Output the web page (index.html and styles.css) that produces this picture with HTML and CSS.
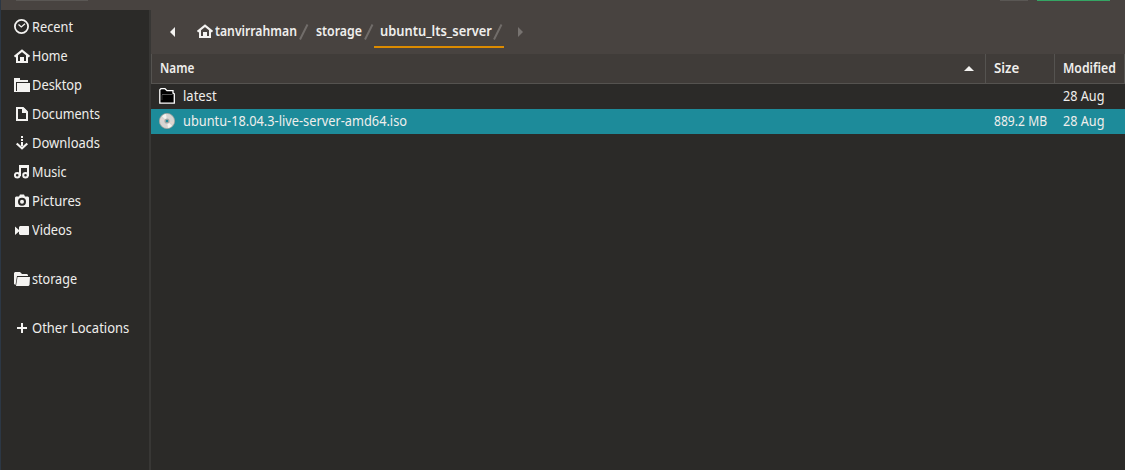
FILE: index.html
```html
<!DOCTYPE html>
<html lang="en">
<head>
<meta charset="utf-8">
<title>Files</title>
<link rel="stylesheet" href="styles.css">
</head>
<body>
<svg class="defs"><defs>
  <g id="home"><path d="M.5 8.700 8 2.700l7.500 6" fill="none" stroke="#f4f3f1" stroke-width="2.200"/><path d="M2 7.500 4 6v7h2V9h4v4h2V6l2 1.500V15H2z" fill="#f4f3f1"/></g>
  <g id="folder"><path d="M0 2l1-1h5l2 2h5l1 1v1H3L1.500 14 0 13zM3.500 6H16l-.5 8-1 1H2z" fill="#f4f3f1"/></g>
</defs></svg>
<div class="window">
  <div class="titlebar"><i class="btn btn-left"></i><i class="btn btn-search"></i><i class="btn btn-open"></i></div>
  <div class="body">
    <nav class="sidebar">
      <a class="place"><svg class="icon" viewBox="0 0 16 16"><circle cx="7.500" cy="7.500" r="6.600" fill="none" stroke="#f4f3f1" stroke-width="1.800"/><path d="M4.500 5.500 7.300 8 11 4.800" fill="none" stroke="#f4f3f1" stroke-width="1.300"/></svg><span class="t recent">Recent</span></a>
      <a class="place"><svg class="icon" viewBox="0 0 16 16"><use href="#home"/></svg><span class="t home">Home</span></a>
      <a class="place"><svg class="icon" viewBox="0 0 16 16"><path d="M0 1h6v2h8v2H2v10H0zM3 6h13v9H1v-1h2z" fill="#f4f3f1"/></svg><span class="t desktop">Desktop</span></a>
      <a class="place"><svg class="icon" viewBox="0 0 16 16"><path d="M3 2h6l4 4v8H3z" fill="none" stroke="#f4f3f1" stroke-width="2"/><path d="M8 2h2l3 3v2H8z" fill="#f4f3f1"/></svg><span class="t documents">Documents</span></a>
      <a class="place"><svg class="icon" viewBox="0 0 16 16"><path d="M7 1h2v2H7zM7 4h2v2H7zM7 7h2v4H7z" fill="#f4f3f1"/><path d="M2.700 8.500 8 13.200l5.300-4.700" fill="none" stroke="#f4f3f1" stroke-width="2.200"/></svg><span class="t downloads">Downloads</span></a>
      <a class="place"><svg class="icon" viewBox="0 0 16 16"><g fill="none" stroke="#f4f3f1" stroke-width="2"><circle cx="3.200" cy="11.300" r="2.300"/><circle cx="11.500" cy="11.300" r="2.300"/><path d="M6 12V2h8v10M6 3h8"/></g></svg><span class="t music">Music</span></a>
      <a class="place"><svg class="icon" viewBox="0 0 16 16"><path fill-rule="evenodd" d="M1 4.500 2 3.500h3l1-2h4l1 2h3l1 1v9.500H1zM8 4.700a4 4 0 1 0 0 8 4 4 0 0 0 0-8z" fill="#f4f3f1"/><circle cx="8" cy="8.700" r="2" fill="#f4f3f1"/></svg><span class="t pictures">Pictures</span></a>
      <a class="place"><svg class="icon" viewBox="0 0 16 16"><path d="M1 4.500 5 8V5l1-1h8.500l.5.5v8l-.5.5H6l-1-1V9.500L1 13z" fill="#f4f3f1"/></svg><span class="t videos">Videos</span></a>
      <a class="place spaced"><svg class="icon" viewBox="0 0 16 16"><use href="#folder"/></svg><span class="t storage">storage</span></a>
      <a class="place spaced"><svg class="icon" viewBox="0 0 16 16"><path d="M7 3h2v4h4v2H9v4H7V9H3V7h4z" fill="#f4f3f1"/></svg><span class="t other">Other Locations</span></a>
    </nav>
    <main class="main">
      <div class="pathbar">
        <svg class="arrow back" viewBox="0 0 5 10"><path d="M5 0v10L0 5z" fill="#f4f3f1"/></svg>
        <a class="crumb"><svg class="icon" viewBox="0 0 16 16"><use href="#home"/></svg><span class="t crumb-user">tanvirrahman</span><svg class="slash" viewBox="0 0 10 16"><path d="M1 15.500 8.500.5" stroke="#716d6a" stroke-width="2"/></svg></a>
        <a class="crumb"><span class="t crumb-storage">storage</span><svg class="slash" viewBox="0 0 10 16"><path d="M1 15.500 8.500.5" stroke="#716d6a" stroke-width="2"/></svg></a>
        <a class="crumb current"><span class="t crumb-server">ubuntu_lts_server</span><svg class="slash" viewBox="0 0 10 16"><path d="M1 15.500 8.500.5" stroke="#716d6a" stroke-width="2"/></svg></a>
        <svg class="arrow next" viewBox="0 0 5 10"><path d="M0 0v10l5-5z" fill="#777370"/></svg>
      </div>
      <div class="row head">
        <div class="name"><span class="t col-name">Name</span><svg class="sort" viewBox="0 0 10 5"><path d="M5 0 10 5H0z" fill="#f4f3f1"/></svg></div>
        <div class="size"><span class="t col-size">Size</span></div>
        <div class="date"><span class="t col-date">Modified</span></div>
      </div>
      <div class="row file">
        <div class="name"><svg class="icon" viewBox="0 0 16 16"><path d="M.8 15.200V1.800L2 .7h4l2 2h6v2.500l1.300.6v9.400z" fill="#000" stroke="#fff" stroke-width="1.300"/><path d="M3 6.500h10.500" stroke="#555"/><path d="M3 7v5" stroke="#333"/></svg><span class="t latest">latest</span></div>
        <div class="size"></div>
        <div class="date"><span class="t day">28 Aug</span></div>
      </div>
      <div class="row file selected">
        <div class="name"><svg class="icon" viewBox="0 0 16 16"><circle cx="8" cy="8" r="7.600" fill="#d6d5d3" stroke="#aaa69f" stroke-width=".8"/><path d="M8 8 3 3.200A7 7 0 0 1 7 1zM8 8l5 4.800A7 7 0 0 1 9 15z" fill="#f5f3ef"/><path d="M8 8 1.200 7 2 5zM8 8l6.800 1-.8 2z" fill="#e3d5cf"/><circle cx="8" cy="8" r="2.600" fill="#aaa9a6"/><circle cx="8" cy="8" r="1.300" fill="#1d8b9a"/></svg><span class="t iso">ubuntu-18.04.3-live-server-amd64.iso</span></div>
        <div class="size"><span class="t bytes">889.2 MB</span></div>
        <div class="date"><span class="t day">28 Aug</span></div>
      </div>
    </main>
  </div>
</div>
</body>
</html>
```
FILE: styles.css
```css
* { box-sizing: border-box; }
body { margin: 0; background: #2b2a28; color: #efeeec; font: 14px/20px "Noto Sans", sans-serif; overflow: hidden; }
.defs { display: none; }
.window { width: 1125px; height: 470px; border-left: 1px solid #2c3744; display: flex; flex-direction: column; }
.titlebar { height: 10px; background: #484340; display: flex; flex: none; }
.btn { height: 1px; background: #5a5754; }
.btn-left { width: 72px; margin-left: 15px; }
.btn-search { width: 28px; margin-left: 912px; }
.btn-open { width: 73px; margin-left: 9px; background: #35a564; }
.body { flex: 1; display: flex; }
.sidebar { width: 150px; padding-top: 3px; border-right: 2px solid #383735; flex: none; }
.place { height: 29px; display: flex; align-items: center; padding: 0 0 1px 13px; gap: 2px; }
.spaced { margin-top: 20px; }
.icon { width: 16px; height: 16px; flex: none; }
.main { flex: 1; min-width: 0; }

.pathbar { height: 44px; background: #484340; display: flex; align-items: stretch; font-weight: 600; }
.arrow { width: 5px; height: 10px; margin-top: 17px; }
.back { margin-left: 19px; margin-right: 22px; }
.crumb { display: flex; align-items: center; height: 38px; padding-top: 4px; }
.crumb .icon { margin-right: 2px; }
.crumb .slash { margin: 2px 0 0 2px; }
.slash { width: 10px; height: 16px; flex: none; }
.crumb + .crumb { padding-left: 7px; }
.crumb + .current { padding-left: 6px; border-bottom: 2px solid #dc8b00; padding-top: 6px; width: 130px; }
.current .slash { margin-left: 1px; }
.next { margin-left: 14px; }

.row { display: grid; grid-template-columns: 834px 69px 71px; height: 25px; align-items: stretch; }
.row > div { display: flex; align-items: center; padding: 0 0 1px 9px; }
.row > .name { padding-left: 8px; gap: 8px; }
.head { height: 30px; background: #403c39; border-bottom: 1px solid #555350; font-weight: 600; }
.head > div { border-left: 1px solid #555350; }
.head > .size, .head > .date { padding-left: 8px; }
.head > .date { border-right: 1px solid #555350; }
.sort { width: 10px; height: 5px; margin-left: auto; margin-right: 11px; }
.selected { background: #1d8b9a; }

.t { white-space: nowrap; flex: none; transform-origin: 0 50%; }
.recent { transform: scaleX(.913); }
.home { transform: scaleX(.892); }
.desktop { transform: scaleX(.919); }
.documents { transform: scaleX(.901); }
.downloads { transform: scaleX(.928); }
.music { transform: scaleX(.898); }
.pictures { transform: scaleX(.932); }
.videos { transform: scaleX(.915); }
.storage { transform: scaleX(.898); }
.other { transform: scaleX(.928); }
.crumb-user { width: 82px; transform: scaleX(.872); }
.crumb-storage { width: 46px; transform: scaleX(.881); }
.crumb-server { width: 112px; transform: scaleX(.92); }
.col-name { transform: scaleX(.838); }
.col-size { transform: scaleX(.95); }
.col-date { transform: scaleX(.873); }
.latest { transform: scaleX(.93); }
.iso { transform: scaleX(.913); }
.bytes { transform: scaleX(.866); }
.day { transform: scaleX(.903); }
```
